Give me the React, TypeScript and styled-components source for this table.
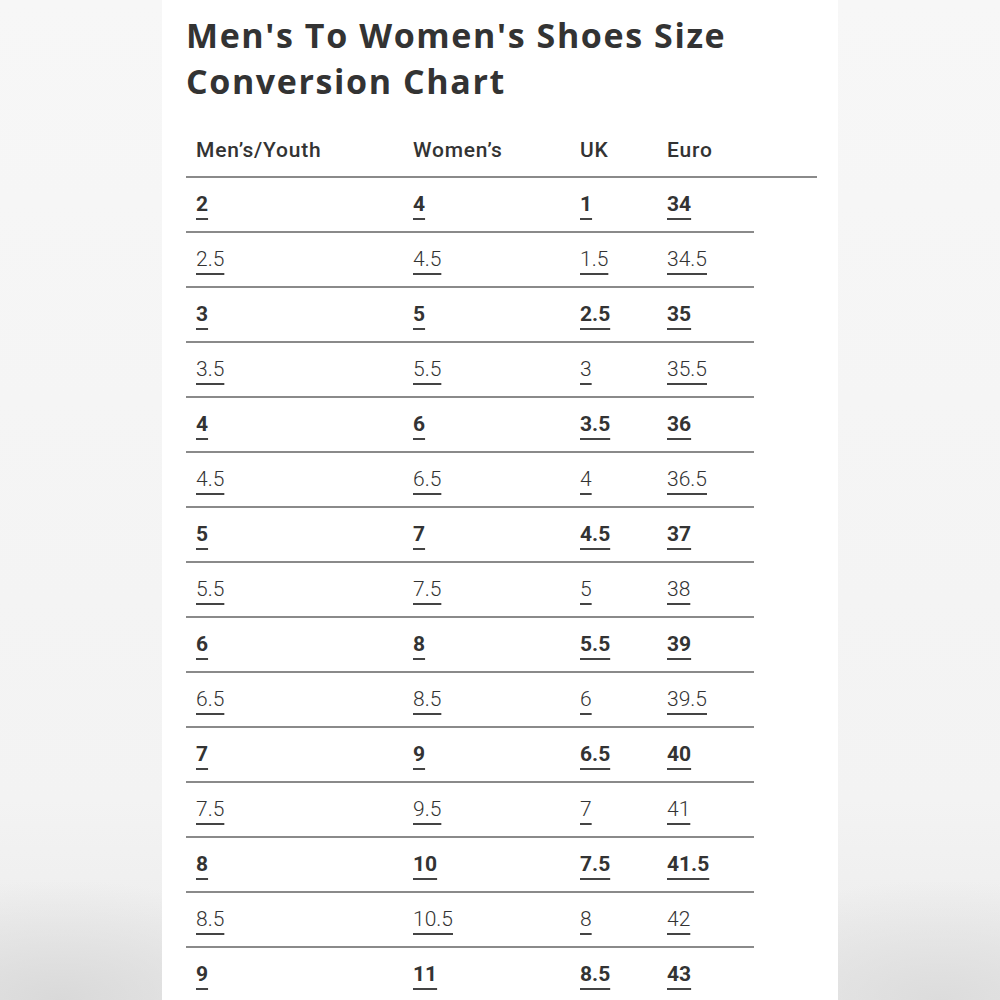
import styled, { createGlobalStyle } from 'styled-components'

const GlobalStyle = createGlobalStyle`
  html, body {
    margin: 0;
    padding: 0;
  }
  body {
    width: 1000px;
    height: 1000px;
    overflow: hidden;
    background: #f4f4f4;
  }
`

const S_page = styled.div`
  width: 1000px;
  height: 1000px;
  display: flex;
  justify-content: center;
  background:
    radial-gradient(ellipse 260px 120px at 60px 1000px, #d9d9d9 0%, rgba(217,217,217,0) 100%),
    radial-gradient(ellipse 260px 120px at 940px 1000px, #dcdcdc 0%, rgba(220,220,220,0) 100%),
    linear-gradient(180deg, #f7f7f7 0%, #f3f3f3 80%, #ebebeb 100%);
`

const S_panel = styled.main`
  width: 676px;
  height: 1000px;
  background: #ffffff;
  padding: 12px 0 0 24px;
  box-sizing: border-box;
  overflow: hidden;
`

const S_h1 = styled.h1`
  margin: 0 0 27px 0;
  font-family: "Open Sans", "Noto Sans", sans-serif;
  font-size: 34px;
  font-weight: 700;
  line-height: 46px;
  color: #333333;
  letter-spacing: 1.6px;
`

const S_table = styled.div`
  display: flex;
  flex-direction: column;
  font-family: "Roboto", "Liberation Sans", sans-serif;
  color: #333333;
`

const S_row = styled.div<{ $head?: boolean }>`
  display: grid;
  grid-template-columns: 217px 167px 87px 1fr;
  align-items: center;
  box-sizing: border-box;
  height: ${({ $head }) => ($head ? '47px' : '55px')};
  width: ${({ $head }) => ($head ? '631px' : '568px')};
  padding: ${({ $head }) => ($head ? '0 0 7px 10px' : '0 0 1px 10px')};
  border-bottom: 2px solid #8a8a8a;
`

const S_th = styled.span`
  font-size: 21px;
  font-weight: 500;
  letter-spacing: 0.8px;
`

const S_td = styled.span<{ $bold: boolean }>`
  justify-self: start;
  font-size: 21px;
  font-weight: ${({ $bold }) => ($bold ? 700 : 300)};
  text-decoration: underline;
  text-decoration-thickness: 2px;
  text-underline-offset: 7px;
  text-decoration-color: #444444;
`

const rows: string[][] = [
  ['2', '4', '1', '34'],
  ['2.5', '4.5', '1.5', '34.5'],
  ['3', '5', '2.5', '35'],
  ['3.5', '5.5', '3', '35.5'],
  ['4', '6', '3.5', '36'],
  ['4.5', '6.5', '4', '36.5'],
  ['5', '7', '4.5', '37'],
  ['5.5', '7.5', '5', '38'],
  ['6', '8', '5.5', '39'],
  ['6.5', '8.5', '6', '39.5'],
  ['7', '9', '6.5', '40'],
  ['7.5', '9.5', '7', '41'],
  ['8', '10', '7.5', '41.5'],
  ['8.5', '10.5', '8', '42'],
  ['9', '11', '8.5', '43'],
]

const App = () => {
  return (
    <>
      <GlobalStyle />
      <S_page>
        <S_panel>
          <S_h1>
            Men's To Women's Shoes Size
            <br />
            Conversion Chart
          </S_h1>

          <S_table>
            <S_row $head>
              <S_th>Men’s/Youth</S_th>
              <S_th>Women’s</S_th>
              <S_th>UK</S_th>
              <S_th>Euro</S_th>
            </S_row>

            {rows.map((r, i) => (
              <S_row key={i}>
                {r.map((v, j) => (
                  <S_td key={j} $bold={i % 2 === 0}>{v}</S_td>
                ))}
              </S_row>
            ))}
          </S_table>
        </S_panel>
      </S_page>
    </>
  )
}

export default App
